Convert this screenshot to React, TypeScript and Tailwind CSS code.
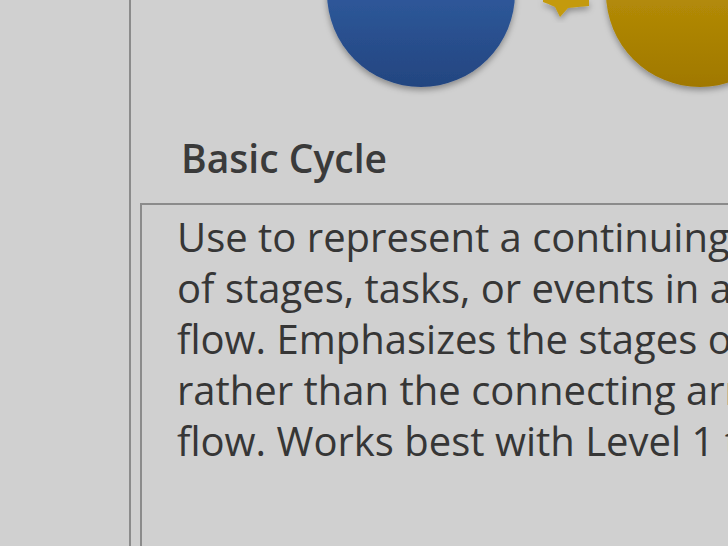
import React from 'react';

// Zoomed-in description pane of a SmartArt layout picker
const DESCRIPTION = [
  'Use to represent a continuing sequence',
  'of stages, tasks, or events in a circular',
  'flow. Emphasizes the stages or steps',
  'rather than the connecting arrows or',
  'flow. Works best with Level 1 text only.',
];

function CycleGraphic() {
  return (
    <svg width="597" height="128" viewBox="0 0 597 128" className="block shrink-0">
      <defs>
        <linearGradient id="blueFill" x1="0" y1="0" x2="0" y2="1">
          <stop offset="0" stopColor="#3a6cb5" />
          <stop offset="1" stopColor="#234580" />
        </linearGradient>
        <linearGradient id="goldFill" x1="0" y1="0" x2="0" y2="1">
          <stop offset="0" stopColor="#c89f10" />
          <stop offset="1" stopColor="#a07800" />
        </linearGradient>
        <filter id="soft" x="-20%" y="-20%" width="140%" height="150%">
          <feDropShadow dx="0" dy="3" stdDeviation="3" floodColor="#000" floodOpacity="0.35" />
        </filter>
      </defs>
      <circle cx="290" cy="-7" r="94" fill="url(#blueFill)" filter="url(#soft)" />
      <circle cx="569" cy="-7" r="94" fill="url(#goldFill)" filter="url(#soft)" />
      <path
        d="M412 0 L458 0 L458 6 Q446 7 437 8 L429 17 L424 7 Q418 4 412 2 Z"
        fill="#c49a0c"
        filter="url(#soft)"
      />
    </svg>
  );
}

export default function App() {
  return (
    <div
      className="w-[728px] h-[546px] bg-[#d0d0d0] flex overflow-hidden"
      style={{ fontFamily: '"Open Sans", "Noto Sans", sans-serif' }}
    >
      <div className="w-[129px] shrink-0" />
      <div className="w-[2px] shrink-0 bg-[#8b8b8b]" />
      <div className="flex flex-col min-w-0 flex-1">
        <CycleGraphic />
        <h2 className="mt-[5px] ml-[50px] text-[39px] leading-[50px] font-semibold text-[#3a3a3a] whitespace-nowrap">
          Basic Cycle
        </h2>
        <div className="mt-[20px] ml-[9px] w-[640px] flex-1 border-t-2 border-l-2 border-[#8b8b8b] pl-[35px] pt-[6px]">
          {DESCRIPTION.map((line, i) => (
            <p key={i} className="text-[40px] leading-[51px] text-[#363636] whitespace-nowrap">
              {line}
            </p>
          ))}
        </div>
      </div>
    </div>
  );
}
